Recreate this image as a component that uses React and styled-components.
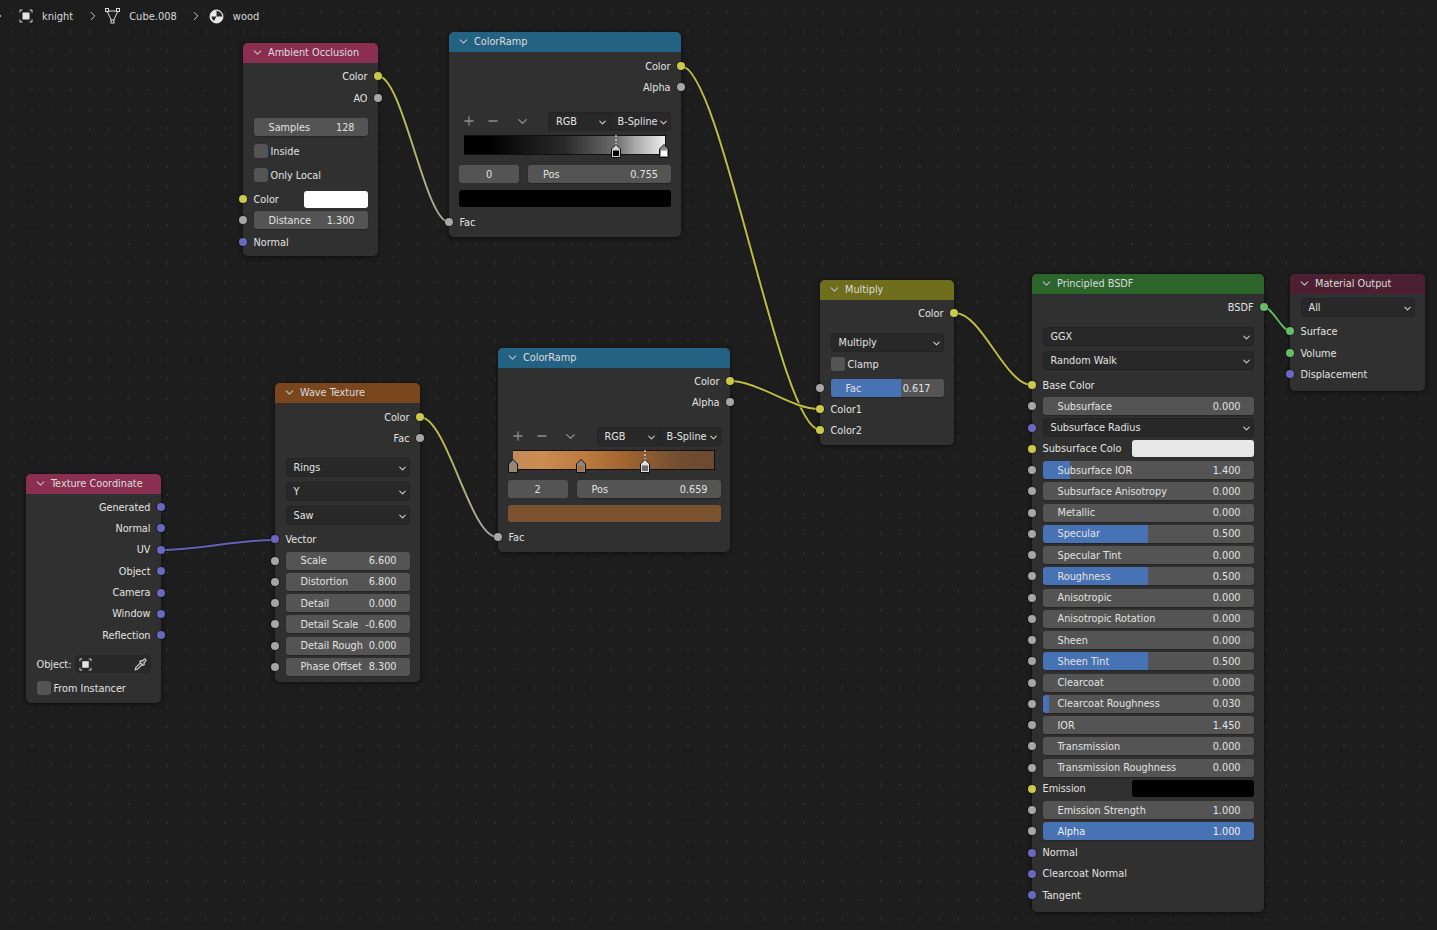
import React from 'react'
import styled, { createGlobalStyle } from 'styled-components'
import { Plus, Minus, ChevronDown, ChevronRight, Pipette } from 'lucide-react'

const GlobalStyle = createGlobalStyle`
  html, body { margin: 0; padding: 0; background: #1d1d1d; overflow: hidden; }
  * { box-sizing: border-box; }
`

const socketColors = { yellow: '#c9c94a', gray: '#a6a6a6', blue: '#6868c0', green: '#66bb66' }

const Page = styled.div`
  position: relative;
  width: 1437px;
  height: 930px;
  overflow: hidden;
  color: #e2e2e2;
  font-family: "DejaVu Sans Condensed", "DejaVu Sans", sans-serif;
  font-stretch: condensed;
  font-size: 10.8px;
  background-color: #1d1d1d;
  background-image: radial-gradient(circle, #2b2b2b 0.9px, transparent 1.3px);
  background-size: 19.3px 19.3px;
  background-position: 3px 3px;
`

const Breadcrumb = styled.div`
  position: relative;
  z-index: 3;
  display: flex;
  align-items: center;
  height: 32px;
  font-size: 11px;
  color: #d8d8d8;
`

const Crumb = styled.span`
  display: flex;
  align-items: center;
  gap: ${({ $gap }) => $gap || 9}px;
  margin-left: ${({ $ml }) => $ml}px;
`

const Wires = styled.svg`
  position: absolute;
  left: 0;
  top: 0;
  z-index: 1;
`

const Node = styled.section`
  position: absolute;
  z-index: 2;
  left: ${({ $x }) => $x}px;
  top: ${({ $y }) => $y}px;
  width: ${({ $w }) => $w}px;
  padding-bottom: ${({ $pb }) => $pb ?? 5}px;
  background: #303030;
  border-radius: 5px;
  box-shadow: 0 1px 5px rgba(0, 0, 0, 0.55);
`

const Header = styled.header`
  display: flex;
  align-items: center;
  gap: 4px;
  height: 20px;
  padding: 0 0 2px 8px;
  background: ${({ $color }) => $color};
  border-radius: 5px 5px 0 0;
  color: #dcdcdc;
`

const Row = styled.div`
  position: relative;
  display: flex;
  align-items: center;
  justify-content: ${({ $right }) => ($right ? 'flex-end' : 'flex-start')};
  gap: ${({ $gap }) => $gap || 0}px;
  height: 18px;
  margin-top: ${({ $mt }) => $mt ?? 3.25}px;
  padding: 0 ${({ $pad }) => $pad ?? 10.5}px;
`

const Socket = styled.i`
  position: absolute;
  top: 5px;
  ${({ $right }) => ($right ? 'right: -4px;' : 'left: -4px;')}
  width: 8px;
  height: 8px;
  border-radius: 50%;
  background: ${({ $kind }) => socketColors[$kind]};
  box-shadow: 0 0 0 1px rgba(0, 0, 0, 0.3);
`

const Slider = styled.div`
  display: flex;
  flex: 1;
  justify-content: space-between;
  align-items: center;
  height: 18px;
  padding: 0 13px 0 15px;
  border-radius: 3px;
  white-space: nowrap;
  color: ${({ $fill }) => ($fill === 100 ? '#f0f0f0' : '#e2e2e2')};
  background: linear-gradient(90deg, #4772b3 ${({ $fill }) => $fill || 0}%, #545454 ${({ $fill }) => $fill || 0}%);
  box-shadow: 0 1px 1px rgba(0, 0, 0, 0.25);
`

const NumBox = styled.div`
  display: flex;
  flex: 0 0 60px;
  justify-content: center;
  align-items: center;
  height: 18px;
  border-radius: 3px;
  background: #545454;
`

const Dropdown = styled.div`
  position: relative;
  display: flex;
  flex: 1;
  align-items: center;
  height: 19px;
  padding-left: 7px;
  background: #282828;
  border: 1px solid #242424;
  border-radius: ${({ $joined }) => ($joined === 'left' ? '3px 0 0 3px' : $joined === 'right' ? '0 3px 3px 0' : '3px')};
  white-space: nowrap;
  svg {
    position: absolute;
    right: 1px;
    top: 4px;
    color: #d0d0d0;
  }
`

const CheckBox = styled.span`
  flex: 0 0 14px;
  height: 14px;
  margin-right: 3px;
  border-radius: 3px;
  background: #545454;
`

const Swatch = styled.div`
  flex: ${({ $w }) => ($w ? `0 0 ${$w}px` : 1)};
  height: 17px;
  margin-left: auto;
  border-radius: 3px;
  background: ${({ $color }) => $color};
`

const RampTools = styled.div`
  display: flex;
  align-items: center;
  margin: 0 9px 0 -2px;
  color: #8e8e8e;
`

const RampTool = styled.span`
  display: flex;
  justify-content: center;
  width: ${({ $wide }) => ($wide ? 34 : 24)}px;
`

const DropGroup = styled.div`
  display: flex;
  flex: 1;
`

const RampBar = styled.div`
  position: relative;
  height: 20px;
  margin: ${({ $mt }) => $mt ?? 5}px 15px 0;
  border: 1px solid #111;
  border-left-width: 0;
  background: ${({ $ramp }) => $ramp};
`

const RampHandle = styled.svg`
  position: absolute;
  left: ${({ $pos }) => $pos}px;
  top: ${({ $line }) => ($line ? -1 : 8)}px;
  overflow: visible;
`

const ObjectField = styled.div`
  display: flex;
  flex: 1;
  align-items: center;
  justify-content: space-between;
  height: 18px;
  margin-left: 4px;
  padding: 0 4px 0 4px;
  background: #282828;
  border-radius: 3px;
  color: #cfcfcf;
`

const Chevron = () => <ChevronDown size={13} strokeWidth={2} color="#bdbdbd" />

const DropChevron = () => <ChevronDown size={11} strokeWidth={2.2} />

const PathChevron = () => <ChevronRight size={14} strokeWidth={1.6} />

const ObjectIcon = ({ size = 14 }) => (
  <svg width={size} height={size} viewBox="0 0 14 14" fill="none" stroke="#d8d8d8" strokeWidth="1">
    <path d="M1 3.5V1h2.5M10.5 1H13v2.5M13 10.5V13h-2.5M3.5 13H1v-2.5" />
    <rect x="3.5" y="3.5" width="7" height="7" fill="#e4e4e4" stroke="none" />
  </svg>
)

const MeshIcon = () => (
  <svg width="15" height="16" viewBox="0 0 15 16" fill="none" stroke="#d8d8d8" strokeWidth="1">
    <path d="M3 3h9M2.5 4l4 8.5M12.5 4l-4 8.5" />
    <rect x="0.5" y="0.5" width="3" height="3" />
    <rect x="11.5" y="0.5" width="3" height="3" />
    <rect x="6" y="12" width="3" height="3" />
  </svg>
)

const MaterialIcon = () => (
  <svg width="15" height="15" viewBox="0 0 15 15">
    <circle cx="7.5" cy="7.5" r="6.5" fill="#e8e8e8" stroke="#e8e8e8" />
    <path d="M7.5 7.5V1.8A5.7 5.7 0 0 1 13.2 7.5Z" fill="#2a2a2a" />
    <path d="M7.5 7.5H2.5A5.2 5.2 0 0 0 5 12Z" fill="#2a2a2a" />
  </svg>
)

const Handle = ({ pos, top, block, line }) => (
  <RampHandle $pos={pos - 5} $line={line} width="10" height={line ? 23 : 14} viewBox={line ? '0 -9 10 23' : '0 0 10 14'}>
    {line && <path d="M5 -9V1" stroke="#fff" strokeDasharray="2 2" />}
    <path d="M0.5 13.5V5L5 0.5L9.5 5V13.5Z" fill={top} stroke="#111" />
    <rect x="2" y="6.5" width="6" height="5.5" fill={block} />
  </RampHandle>
)

const Output = ({ label, kind = 'gray', mt }) => (
  <Row $right $mt={mt}>
    {label}
    <Socket $kind={kind} $right />
  </Row>
)

const Input = ({ label, kind = 'gray', mt }) => (
  <Row $mt={mt}>
    <Socket $kind={kind} />
    {label}
  </Row>
)

const Value = ({ label, value, fill, mt, socket = true }) => (
  <Row $mt={mt}>
    {socket && <Socket $kind="gray" />}
    <Slider $fill={fill}>
      <span>{label}</span>
      <span>{value}</span>
    </Slider>
  </Row>
)

const Select = ({ label, mt, socket }) => (
  <Row $mt={mt}>
    {socket && <Socket $kind={socket} />}
    <Dropdown>
      {label}
      <DropChevron />
    </Dropdown>
  </Row>
)

const Check = ({ label, mt }) => (
  <Row $mt={mt}>
    <CheckBox />
    {label}
  </Row>
)

const ColorInput = ({ label, color, width, mt }) => (
  <Row $mt={mt}>
    <Socket $kind="yellow" />
    {label}
    <Swatch $color={color} $w={width} />
  </Row>
)

const Title = ({ color, children }) => (
  <Header $color={color}>
    <Chevron />
    {children}
  </Header>
)

const ColorRamp = ({ x, y, pad, index, pos, swatch, ramp, handles, mts }) => (
  <Node $x={x} $y={y} $w={232} $pb={6}>
    <Title color="#246283">ColorRamp</Title>
    <Output label="Color" kind="yellow" mt={mts[0]} />
    <Output label="Alpha" mt={3} />
    <Row $mt={16} $pad={pad}>
      <RampTools>
        <RampTool><Plus size={14} strokeWidth={2.2} /></RampTool>
        <RampTool><Minus size={14} strokeWidth={2.2} /></RampTool>
        <RampTool $wide><ChevronDown size={15} strokeWidth={2.2} /></RampTool>
      </RampTools>
      <DropGroup>
        <Dropdown $joined="left">RGB<DropChevron /></Dropdown>
        <Dropdown $joined="right">B-Spline<DropChevron /></Dropdown>
      </DropGroup>
    </Row>
    <RampBar $ramp={ramp} $mt={mts[1]}>
      {handles.map((h) => <Handle key={h.pos} {...h} />)}
    </RampBar>
    <Row $gap={9} $mt={10} $pad={pad}>
      <NumBox>{index}</NumBox>
      <Slider><span>Pos</span><span>{pos}</span></Slider>
    </Row>
    <Row $mt={6} $pad={pad}><Swatch $color={swatch} /></Row>
    <Input label="Fac" mt={6} />
  </Node>
)

const principled = [
  { label: 'Subsurface', value: '0.000' },
  { select: 'Subsurface Radius' },
  { color: 'Subsurface Colo', swatch: '#e8e8e8' },
  { label: 'Subsurface IOR', value: '1.400', fill: 13 },
  { label: 'Subsurface Anisotropy', value: '0.000' },
  { label: 'Metallic', value: '0.000' },
  { label: 'Specular', value: '0.500', fill: 50 },
  { label: 'Specular Tint', value: '0.000' },
  { label: 'Roughness', value: '0.500', fill: 50 },
  { label: 'Anisotropic', value: '0.000' },
  { label: 'Anisotropic Rotation', value: '0.000' },
  { label: 'Sheen', value: '0.000' },
  { label: 'Sheen Tint', value: '0.500', fill: 50 },
  { label: 'Clearcoat', value: '0.000' },
  { label: 'Clearcoat Roughness', value: '0.030', fill: 3 },
  { label: 'IOR', value: '1.450' },
  { label: 'Transmission', value: '0.000' },
  { label: 'Transmission Roughness', value: '0.000' },
  { color: 'Emission', swatch: '#000' },
  { label: 'Emission Strength', value: '1.000' },
  { label: 'Alpha', value: '1.000', fill: 100 },
]

const wires = [
  { id: 'ao', d: 'M378 76C403 76 425 222 449 222', from: '#bcbc40', to: '#a1a1a1', y1: 76, y2: 222 },
  { id: 'ramp1', d: 'M681 66C721 66 780 430 820 430', from: '#bcbc40', to: '#bcbc40', y1: 66, y2: 430 },
  { id: 'ramp2', d: 'M729 381C760 381 790 409 820 409', from: '#bcbc40', to: '#bcbc40', y1: 381, y2: 409 },
  { id: 'mix', d: 'M955 313C982 313 1005 385 1032 385', from: '#bcbc40', to: '#bcbc40', y1: 313, y2: 385 },
  { id: 'bsdf', d: 'M1264 307C1272 307 1282 331 1290 331', from: '#5fb85f', to: '#5fb85f', y1: 307, y2: 331 },
  { id: 'uv', d: 'M160 550C200 550 235 540 275 540', from: '#6363b5', to: '#6363b5', y1: 550, y2: 540 },
  { id: 'wave', d: 'M420 417C447 417 470 537 497 537', from: '#bcbc40', to: '#a1a1a1', y1: 417, y2: 537 },
]

const App = () => {
  return (
    <Page>
      <GlobalStyle />
      <Breadcrumb>
        <Crumb $ml={-8}><PathChevron /></Crumb>
        <Crumb $ml={13}><ObjectIcon />knight</Crumb>
        <Crumb $ml={13}><PathChevron /></Crumb>
        <Crumb $ml={5}><MeshIcon />Cube.008</Crumb>
        <Crumb $ml={12}><PathChevron /></Crumb>
        <Crumb $ml={6}><MaterialIcon />wood</Crumb>
      </Breadcrumb>

      <Wires width="1437" height="930" fill="none">
        <defs>
          {wires.map((w) => (
            <linearGradient key={w.id} id={w.id} gradientUnits="userSpaceOnUse" x1="0" y1={w.y1} x2="0" y2={w.y2}>
              <stop offset="0" stopColor={w.from} />
              <stop offset="1" stopColor={w.to} />
            </linearGradient>
          ))}
        </defs>
        {wires.map((w) => (
          <g key={w.id}>
            <path d={w.d} stroke="#151515" strokeWidth="3.5" />
            <path d={w.d} stroke={`url(#${w.id})`} strokeWidth="2" />
          </g>
        ))}
      </Wires>

      <Node $x={243} $y={43} $w={135}>
        <Title color="#8a2f50">Ambient Occlusion</Title>
        <Output label="Color" kind="yellow" mt={4} />
        <Output label="AO" mt={4} />
        <Value label="Samples" value="128" socket={false} mt={11} />
        <Check label="Inside" mt={6} />
        <Check label="Only Local" mt={6} />
        <ColorInput label="Color" color="#fff" width={64} mt={6} />
        <Value label="Distance" value="1.300" mt={3} />
        <Input label="Normal" kind="blue" mt={4} />
      </Node>

      <ColorRamp
        x={449}
        y={32}
        pad={10}
        index="0"
        pos="0.755"
        swatch="#000"
        mts={[5, 5]}
        ramp="linear-gradient(90deg, #000 0%, #000 12%, #2a2a2a 50%, #6a6a6a 75%, #a8a8a8 85%, #eee 100%)"
        handles={[
          { pos: 152, top: '#d0d0d0', block: '#000', line: true },
          { pos: 200, top: '#8a8a8a', block: '#fff' },
        ]}
      />

      <ColorRamp
        x={498}
        y={348}
        pad={9.5}
        index="2"
        pos="0.659"
        swatch="#7b5230"
        mts={[4, 5]}
        ramp="linear-gradient(90deg, #c08a58 0%, #cc8c50 14%, #bc7a3e 36%, #a86830 52%, #8a5a32 68%, #704c30 85%, #6c4a30 100%)"
        handles={[
          { pos: 0, top: '#8a8a8a', block: '#a08468' },
          { pos: 68, top: '#8a8a8a', block: '#a86c42' },
          { pos: 132, top: '#e0e0e0', block: '#6a6a6a', line: true },
        ]}
      />

      <Node $x={275} $y={383} $w={145} $pb={6}>
        <Title color="#79461d">Wave Texture</Title>
        <Output label="Color" kind="yellow" mt={5} />
        <Output label="Fac" mt={3} />
        <Select label="Rings" mt={11} />
        <Select label="Y" mt={6} />
        <Select label="Saw" mt={6} />
        <Input label="Vector" kind="blue" mt={6} />
        <Value label="Scale" value="6.600" mt={3.5} />
        <Value label="Distortion" value="6.800" />
        <Value label="Detail" value="0.000" />
        <Value label="Detail Scale" value="-0.600" />
        <Value label="Detail Rough" value="0.000" />
        <Value label="Phase Offset" value="8.300" />
      </Node>

      <Node $x={26} $y={474} $w={135} $pb={6}>
        <Title color="#8a2f50">Texture Coordinate</Title>
        <Output label="Generated" kind="blue" mt={4} />
        {['Normal', 'UV', 'Object', 'Camera', 'Window', 'Reflection'].map((l) => (
          <Output key={l} label={l} kind="blue" mt={3.4} />
        ))}
        <Row $mt={11}>
          Object:
          <ObjectField>
            <ObjectIcon size={13} />
            <Pipette size={13} strokeWidth={2.2} />
          </ObjectField>
        </Row>
        <Check label="From Instancer" mt={6} />
      </Node>

      <Node $x={820} $y={280} $w={134} $pb={6}>
        <Title color="#6e6e1d">Multiply</Title>
        <Output label="Color" kind="yellow" mt={4} />
        <Select label="Multiply" mt={11} />
        <Check label="Clamp" mt={4} />
        <Value label="Fac" value="0.617" fill={61.7} mt={6} />
        <Input label="Color1" kind="yellow" />
        <Input label="Color2" kind="yellow" mt={3} />
      </Node>

      <Node $x={1032} $y={274} $w={232} $pb={8}>
        <Title color="#2b652b">Principled BSDF</Title>
        <Output label="BSDF" kind="green" mt={4} />
        <Select label="GGX" mt={11} />
        <Select label="Random Walk" mt={6} />
        <Input label="Base Color" kind="yellow" mt={7} />
        {principled.map((p) => {
          if (p.select) return <Select key={p.select} label={p.select} socket="blue" />
          if (p.color) return <ColorInput key={p.color} label={p.color} color={p.swatch} width={122} />
          return <Value key={p.label} {...p} />
        })}
        <Input label="Normal" kind="blue" />
        <Input label="Clearcoat Normal" kind="blue" />
        <Input label="Tangent" kind="blue" />
      </Node>

      <Node $x={1290} $y={274} $w={135} $pb={8}>
        <Title color="#4c2030">Material Output</Title>
        <Select label="All" mt={4} />
        <Input label="Surface" kind="green" mt={6} />
        <Input label="Volume" kind="green" mt={4} />
        <Input label="Displacement" kind="blue" />
      </Node>
    </Page>
  )
}

export default App
